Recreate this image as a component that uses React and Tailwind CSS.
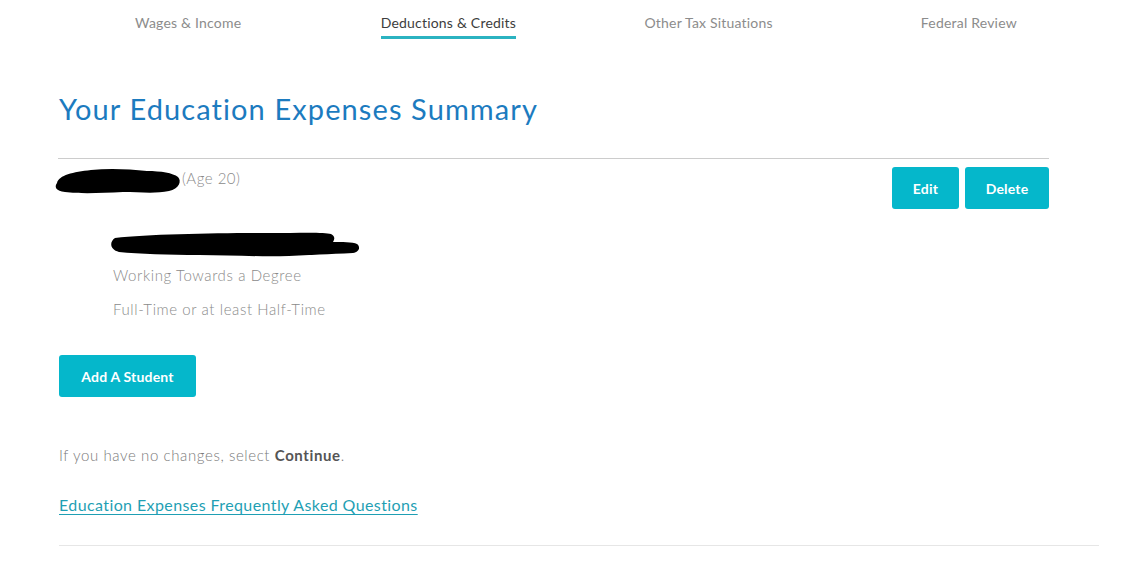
export default function App() {
  const tabs = [
    { label: "Wages & Income", active: false },
    { label: "Deductions & Credits", active: true },
    { label: "Other Tax Situations", active: false },
    { label: "Federal Review", active: false },
  ]

  return (
    <div className="min-h-[571px] w-[1143px] bg-white font-['Lato','Open_Sans',sans-serif]">
      <div className="ml-[58px] w-[1041px]">
        <nav className="grid grid-cols-4 pt-[14px]">
          {tabs.map((t) => (
            <div key={t.label} className="flex justify-center">
              <span
                className={`border-b-[3px] pb-[4px] text-[14px] leading-[18px] tracking-[0.2px] ${
                  t.active ? "border-[#2bb3c1] text-[#3d3d3d]" : "border-transparent text-[#8c8c8c]"
                }`}
              >
                {t.label}
              </span>
            </div>
          ))}
        </nav>

        <h1 className="mt-[52px] pl-px text-[29px] leading-[36px] font-normal tracking-[1.1px] text-[#1c7bbf]">
          Your Education Expenses Summary
        </h1>

        <div className="mt-[31px] w-[991px] border-t border-[#cccccc]">
          <div className="flex justify-between">
            <div className="flex items-start pt-[4px]">
              <Scribble className="-ml-[7px] h-[32px] w-[131px]" />
              <span className="mt-[4px] text-[15px] font-light tracking-[0.5px] text-[#8a8a8a]">(Age 20)</span>
            </div>
            <div className="flex gap-[6px] pt-[8px]">
              <Btn className="w-[67px]">Edit</Btn>
              <Btn className="w-[84px]">Delete</Btn>
            </div>
          </div>

          <div className="ml-[55px] mt-[21px]">
            <LongScribble className="-ml-[4px] h-[30px] w-[252px]" />
            <p className="mt-[5px] text-[15px] leading-[20px] font-light tracking-[0.6px] text-[#8a8a8a]">Working Towards a Degree</p>
            <p className="mt-[14px] text-[15px] leading-[20px] font-light tracking-[0.6px] text-[#8a8a8a]">Full-Time or at least Half-Time</p>
          </div>
        </div>

        <div className="ml-px mt-[36px]">
          <Btn className="w-[137px]">Add A Student</Btn>
        </div>

        <p className="ml-px mt-[48px] text-[15px] leading-[20px] font-light tracking-[0.6px] text-[#7a7a7a]">
          If you have no changes, select <span className="font-bold text-[#555555]">Continue</span>.
        </p>

        <a href="#" className="ml-px mt-[30px] inline-block text-[16px] leading-[20px] tracking-[0.4px] text-[#1f9fb4] underline underline-offset-[3px]">
          Education Expenses Frequently Asked Questions
        </a>

        <div className="ml-px mt-[28px] border-t border-[#e6e6e6]" />
      </div>
    </div>
  )
}

function Btn({ children, className }) {
  return (
    <button className={`flex h-[42px] items-center justify-center rounded-[3px] bg-[#05b7cb] text-[14px] font-bold tracking-[0.2px] text-white ${className}`}>
      {children}
    </button>
  )
}

function Scribble({ className }) {
  return (
    <svg viewBox="0 0 131 32" className={className}>
      <path
        d="M6 20 C8 12 22 9 40 7 C58 5 78 6 96 8 C110 8 122 10 127 14 C131 18 128 26 118 28 C104 31 88 29 72 29 C50 30 30 31 14 29 C5 28 3 24 6 20 Z"
        fill="#000"
      />
    </svg>
  )
}

function LongScribble({ className }) {
  return (
    <svg viewBox="0 0 252 30" className={className}>
      <path
        d="M6 8 C40 4 110 3 160 3 C190 3 215 2 222 4 C226 6 226 9 224 12 C232 12 244 12 248 14 C252 17 250 22 244 23 C220 24 200 25 180 26 C150 27 120 25 90 25 C60 25 30 24 10 22 C1 20 0 12 6 8 Z"
        fill="#000"
      />
    </svg>
  )
}
